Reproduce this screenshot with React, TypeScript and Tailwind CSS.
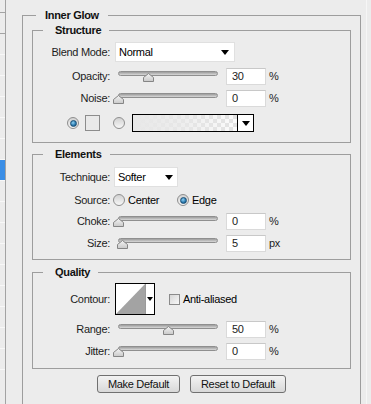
import React from 'react';

const font = { fontFamily: '"Liberation Sans", Arial, sans-serif' };

function Arrow() {
  return (
    <svg width="8" height="5" viewBox="0 0 8 5" className="block">
      <path d="M0 0 H8 L4 5 Z" fill="#000" />
    </svg>
  );
}

function Label({ children }: { children: React.ReactNode }) {
  return <div className="w-[77px] shrink-0 text-right text-[#1c1c1c]">{children}</div>;
}

function Slider({ value }: { value: number }) {
  const left = Math.round((value / 100) * 99);
  return (
    <div className="relative ml-[3px] h-[11px] w-[110px] shrink-0">
      <div className="mx-[5px] h-[5px] rounded-full border border-[#8f8f8f] bg-gradient-to-b from-[#9c9c9c] to-[#d9d9d9]" />
      <svg
        width="11"
        height="9"
        viewBox="0 0 11 9"
        className="absolute top-[2px]"
        style={{ left }}
      >
        <defs>
          <linearGradient id="thumb" x1="0" y1="0" x2="0" y2="1">
            <stop offset="0" stopColor="#f4f4f4" />
            <stop offset="1" stopColor="#c9c9c9" />
          </linearGradient>
        </defs>
        <path d="M5.5 0.5 L10.5 4.5 V8.5 H0.5 V4.5 Z" fill="url(#thumb)" stroke="#858585" />
      </svg>
    </div>
  );
}

function NumBox({ value, unit }: { value: string; unit: string }) {
  return (
    <>
      <div className="ml-[3px] flex h-[17px] w-[40px] shrink-0 items-center border border-[#dadada] border-t-[#c8c8c8] bg-white pl-[5px] text-[#1c1c1c]">
        {value}
      </div>
      <span className="ml-[3px] text-[#1c1c1c]">{unit}</span>
    </>
  );
}

function Radio({ checked }: { checked?: boolean }) {
  return (
    <div className="flex h-[12px] w-[12px] shrink-0 items-center justify-center rounded-full border border-[#8e8e8e] bg-gradient-to-b from-[#d2d2d2] to-[#f7f7f7]">
      {checked && (
        <div className="h-[7px] w-[7px] rounded-full border border-[#1b4f75] bg-[radial-gradient(circle_at_40%_35%,#8fd0f2,#2777ad_60%,#14476c)]" />
      )}
    </div>
  );
}

function Group({ title, children, className = '' }: { title: string; children: React.ReactNode; className?: string }) {
  return (
    <fieldset className={`border border-[#9d9d9d] ${className}`}>
      <legend className="ml-[10px] pl-[12px] pr-[8px] text-[11px] font-bold leading-[13px] text-[#111]">{title}</legend>
      {children}
    </fieldset>
  );
}

export default function App() {
  const leftRows = [0, 1, 2, 3, 4, 5, 6, 7, 8, 9, 10, 11, 12, 13, 14, 15, 16];

  return (
    <div className="flex h-[404px] w-[371px] overflow-hidden bg-[#ececec] text-[11px] leading-[13px] tracking-[-0.3px]" style={font}>
      {/* list on the left, mostly cut off */}
      <div className="w-[6px] shrink-0 border-r border-[#a3a3a3] pt-[12px]">
        <div className="border-t border-[#a3a3a3]">
          {leftRows.map((i) => (
            <div
              key={i}
              className={`h-[21px] border-b ${i === 0 ? 'border-[#a3a3a3]' : 'border-[#f8f8f8]'} ${i === 7 ? 'bg-[#3a8ee6]' : ''}`}
            />
          ))}
        </div>
      </div>

      <fieldset className="ml-[16px] mt-[9px] h-[420px] w-[339px] shrink-0 border border-[#9d9d9d]">
        <legend className="ml-[13px] px-[9px] text-[11px] font-bold leading-[13px] text-[#111]">Inner Glow</legend>
        <div className="px-[9px]">
          {/* Structure */}
          <Group title="Structure" className="mt-[2px]">
            <div className="flex flex-col pb-[9px] pt-[5px]">
              <div className="flex h-[20px] items-center">
                <Label>Blend Mode:</Label>
                <div className="ml-[5px] flex h-[20px] w-[120px] items-center justify-between border border-[#e0e0e0] bg-white pl-[3px] pr-[5px]">
                  <span>Normal</span>
                  <Arrow />
                </div>
              </div>
              <div className="mt-[5px] flex h-[18px] items-center">
                <Label>Opacity:</Label>
                <Slider value={30} />
                <NumBox value="30" unit="%" />
              </div>
              <div className="mt-[4px] flex h-[18px] items-center">
                <Label>Noise:</Label>
                <Slider value={0} />
                <NumBox value="0" unit="%" />
              </div>
              <div className="mt-[6px] flex h-[20px] items-center pl-[34px]">
                <Radio checked />
                <div className="ml-[6px] h-[16px] w-[15px] border border-[#8c8c8c] bg-[#e9e9e9]" />
                <div className="ml-[13px]">
                  <Radio />
                </div>
                <div className="ml-[7px] flex h-[18px] w-[122px] border border-black">
                  <div className="relative flex-1 bg-[conic-gradient(#e2e2e2_25%,#fbfbfb_0_50%,#e2e2e2_0_75%,#fbfbfb_0)] bg-[length:8px_8px]">
                    <div className="h-full w-full bg-gradient-to-r from-[#e8e8e8] via-[#e8e8e8]/70 to-transparent" />
                  </div>
                  <div className="flex w-[16px] items-center justify-center border-l border-black bg-white">
                    <Arrow />
                  </div>
                </div>
              </div>
            </div>
          </Group>

          {/* Elements */}
          <Group title="Elements" className="mt-[5px]">
            <div className="flex flex-col pb-[7px] pt-[6px]">
              <div className="flex h-[20px] items-center">
                <Label>Technique:</Label>
                <div className="ml-[4px] flex h-[20px] w-[64px] items-center justify-between border border-[#e0e0e0] bg-white pl-[3px] pr-[4px]">
                  <span>Softer</span>
                  <Arrow />
                </div>
              </div>
              <div className="mt-[4px] flex h-[18px] items-center">
                <Label>Source:</Label>
                <div className="ml-[3px]">
                  <Radio />
                </div>
                <span className="ml-[3px] w-[49px]">Center</span>
                <Radio checked />
                <span className="ml-[3px]">Edge</span>
              </div>
              <div className="mt-[3px] flex h-[18px] items-center">
                <Label>Choke:</Label>
                <Slider value={0} />
                <NumBox value="0" unit="%" />
              </div>
              <div className="mt-[4px] flex h-[18px] items-center">
                <Label>Size:</Label>
                <Slider value={4} />
                <NumBox value="5" unit="px" />
              </div>
            </div>
          </Group>

          {/* Quality */}
          <Group title="Quality" className="mt-[6px]">
            <div className="flex flex-col pb-[8px] pt-[4px]">
              <div className="flex h-[32px] items-center">
                <Label>Contour:</Label>
                <div className="ml-[5px] flex h-[32px] w-[40px] border border-black bg-white">
                  <svg width="29" height="30" viewBox="0 0 29 30" className="block">
                    <path d="M0 30 L29 0 V30 Z" fill="#a3a3a3" />
                  </svg>
                  <div className="flex flex-1 items-center justify-center border-l border-[#9a9a9a]">
                    <svg width="6" height="4" viewBox="0 0 6 4" className="block">
                      <path d="M0 0 H6 L3 4 Z" fill="#000" />
                    </svg>
                  </div>
                </div>
                <div className="ml-[14px] h-[11px] w-[11px] border border-[#8a8a8a] bg-gradient-to-br from-[#d6d6d6] to-[#f8f8f8]" />
                <span className="ml-[3px]">Anti-aliased</span>
              </div>
              <div className="mt-[5px] flex h-[18px] items-center">
                <Label>Range:</Label>
                <Slider value={50} />
                <NumBox value="50" unit="%" />
              </div>
              <div className="mt-[4px] flex h-[18px] items-center">
                <Label>Jitter:</Label>
                <Slider value={0} />
                <NumBox value="0" unit="%" />
              </div>
            </div>
          </Group>

          <div className="mt-[6px] flex justify-center gap-[10px]">
            <button className="h-[18px] w-[83px] rounded-[3px] border border-[#707070] bg-gradient-to-b from-[#f3f3f3] to-[#d8d8d8] text-[11px] leading-[13px] text-[#111]">
              Make Default
            </button>
            <button className="h-[18px] w-[96px] rounded-[3px] border border-[#707070] bg-gradient-to-b from-[#f3f3f3] to-[#d8d8d8] text-[11px] leading-[13px] text-[#111]">
              Reset to Default
            </button>
          </div>
        </div>
      </fieldset>

      <div className="ml-[5px] w-[1px] shrink-0 bg-[#f6f6f6]" />
    </div>
  );
}
